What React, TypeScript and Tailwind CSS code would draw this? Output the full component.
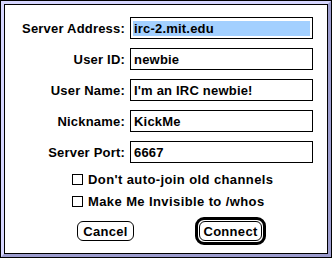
import React from "react";

const font = { fontFamily: '"Liberation Sans", Arial, sans-serif' };

function Row({ label, value, selected }: { label: string; value: string; selected?: boolean }) {
  return (
    <div className="flex h-[22px] items-center">
      <div className="w-[121px] shrink-0 pr-[1px] text-right text-[13px] font-bold leading-none tracking-[0.2px] text-black">{label}</div>
      <div className="ml-[4px] flex h-[22px] w-[183px] items-center border border-black bg-white px-[2px]">
        <div
          className={
            selected
              ? "flex h-[15px] w-full items-center bg-[#a3d0ff] pl-[1px] text-[13px] font-bold leading-none tracking-[0.2px] text-black"
              : "flex h-[15px] w-full items-center pl-[1px] text-[13px] font-bold leading-none tracking-[0.2px] text-black"
          }
        >
          {value}
        </div>
      </div>
    </div>
  );
}

function Check({ label }: { label: string }) {
  return (
    <div className="flex h-[11px] items-center">
      <div className="h-[11px] w-[11px] border border-black bg-white" />
      <div className="ml-[5px] text-[13px] font-bold leading-none tracking-[0.4px] text-black">{label}</div>
    </div>
  );
}

export default function App() {
  return (
    <div className="h-[258px] w-[332px] bg-black p-px" style={font}>
      <div className="h-full w-full border-[3px] border-t-[#d6d6ff] border-l-[#d6d6ff] border-b-[#9c9cce] border-r-[#9c9cce] bg-[#b8b8ea]">
        <div className="h-full w-full border border-black bg-white">
          <div className="flex flex-col pt-[12px]">
            <div className="flex flex-col gap-[9px]">
              <Row label="Server Address:" value="irc-2.mit.edu" selected />
              <Row label="User ID:" value="newbie" />
              <Row label="User Name:" value="I'm an IRC newbie!" />
              <Row label="Nickname:" value="KickMe" />
              <Row label="Server Port:" value="6667" />
            </div>
            <div className="mt-[11px] flex flex-col gap-[11px] pl-[67px]">
              <Check label="Don't auto-join old channels" />
              <Check label="Make Me Invisible to /whos" />
            </div>
            <div className="mt-[10px] flex items-center pl-[72px]">
              <div className="flex h-[20px] w-[57px] items-center justify-center rounded-[6px] border border-black bg-white text-[13px] font-bold leading-none tracking-[0.3px] text-black">
                Cancel
              </div>
              <div className="ml-[61px] rounded-[9px] border-[3px] border-black bg-white p-px">
                <div className="flex h-[20px] w-[63px] items-center justify-center rounded-[6px] border border-black bg-white text-[13px] font-bold leading-none tracking-[0.3px] text-black">
                  Connect
                </div>
              </div>
            </div>
          </div>
        </div>
      </div>
    </div>
  );
}
